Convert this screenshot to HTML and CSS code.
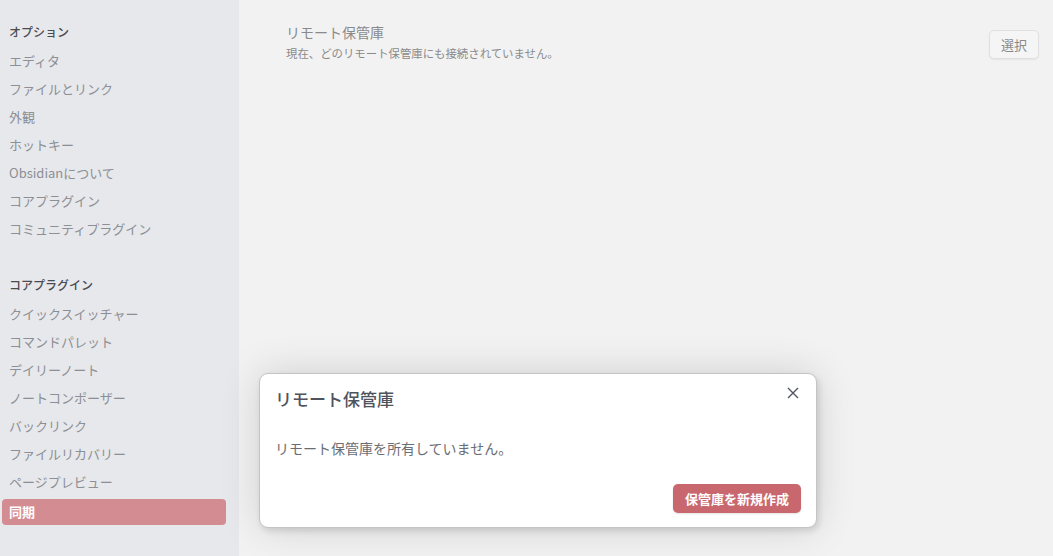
FILE: index.html
```html
<!DOCTYPE html>
<html lang="ja">
<head>
<meta charset="utf-8">
<link rel="stylesheet" href="styles.css">
</head>
<body>
<div class="app">
  <nav class="sidebar">
    <div class="group">
      <div class="heading">オプション</div>
      <div class="item">エディタ</div>
      <div class="item">ファイルとリンク</div>
      <div class="item">外観</div>
      <div class="item">ホットキー</div>
      <div class="item">Obsidianについて</div>
      <div class="item">コアプラグイン</div>
      <div class="item">コミュニティプラグイン</div>
    </div>
    <div class="group">
      <div class="heading">コアプラグイン</div>
      <div class="item">クイックスイッチャー</div>
      <div class="item">コマンドパレット</div>
      <div class="item">デイリーノート</div>
      <div class="item">ノートコンポーザー</div>
      <div class="item">バックリンク</div>
      <div class="item">ファイルリカバリー</div>
      <div class="item">ページプレビュー</div>
      <div class="item active">同期</div>
    </div>
  </nav>
  <main class="content">
    <div class="setting">
      <div class="setting-info">
        <div class="setting-name">リモート保管庫</div>
        <div class="setting-desc">現在、どのリモート保管庫にも接続されていません。</div>
      </div>
      <button class="btn">選択</button>
    </div>
  </main>
</div>
<div class="modal">
  <div class="modal-title">リモート保管庫</div>
  <button class="close" aria-label="close">
    <svg width="12" height="12" viewBox="0 0 12 12"><path d="M1 1 L11 11 M11 1 L1 11" stroke="#4f5560" stroke-width="1.4" fill="none"/></svg>
  </button>
  <div class="modal-body">リモート保管庫を所有していません。</div>
  <div class="modal-actions">
    <button class="btn-cta">保管庫を新規作成</button>
  </div>
</div>
</body>
</html>
```
FILE: styles.css
```css
* { box-sizing: border-box; }
html, body { margin: 0; height: 100%; }
body {
  font-family: "Noto Sans CJK JP", "Noto Sans", sans-serif;
  background: #f2f2f2;
  width: 1053px;
  height: 556px;
  overflow: hidden;
  position: relative;
}
.app { display: flex; height: 556px; }
.sidebar {
  width: 239px;
  flex: none;
  background: #e7e8eb;
  padding: 18px 13px 0 2px;
}
.group + .group { margin-top: 29px; }
.heading {
  font-size: 12px;
  font-weight: 500;
  color: #4a4b50;
  line-height: 16px;
  padding: 6px 7px 8px;
}
.item {
  font-size: 13px;
  color: #8c8f95;
  height: 26px;
  line-height: 26px;
  margin-bottom: 2px;
  padding: 0 7px;
  border-radius: 4px;
  white-space: nowrap;
}
.item.active {
  background: #d38d92;
  color: #fff;
  font-weight: bold;
  margin-top: 4px;
}
.content { flex: 1; padding: 22px 14px 0 47px; }
.setting { display: flex; align-items: flex-start; justify-content: space-between; }
.setting-name { font-size: 14px; color: #8a8a8a; line-height: 20px; }
.setting-desc { font-size: 11.4px; color: #8a8a8a; line-height: 16px; margin-top: 3px; }
.btn {
  margin-top: 8px;
  font-family: inherit;
  font-size: 13px;
  color: #8a8a8a;
  background: #f5f5f5;
  border: 1px solid #e0e0e0;
  border-radius: 5px;
  height: 29px;
  padding: 0 11px;
  box-shadow: 0 1px 2px rgba(0,0,0,0.06);
}
.modal {
  position: absolute;
  left: 259px;
  top: 373px;
  width: 558px;
  height: 155px;
  background: #fff;
  border: 1px solid #c4c4c8;
  border-radius: 9px;
  box-shadow: 0 0 40px rgba(0,0,0,0.14), 2px 3px 6px rgba(0,0,0,0.12);
  padding: 12px 15px 14px 15px;
  display: flex;
  flex-direction: column;
}
.modal-title { font-size: 17px; font-weight: 500; color: #4f535c; line-height: 26px; }
.close {
  position: absolute;
  right: 15px;
  top: 11px;
  width: 16px;
  height: 16px;
  padding: 2px;
  border: 0;
  background: none;
}
.modal-body { font-size: 14px; color: #6a6d73; line-height: 20px; margin-top: 26px; }
.modal-actions { display: flex; justify-content: flex-end; margin-top: auto; }
.btn-cta {
  font-family: inherit;
  font-size: 13px;
  font-weight: bold;
  color: #fff;
  background: #c8676e;
  border: 0;
  border-radius: 5px;
  height: 29px;
  padding: 0 12px;
  box-shadow: 0 1px 2px rgba(0,0,0,0.12);
}
```
